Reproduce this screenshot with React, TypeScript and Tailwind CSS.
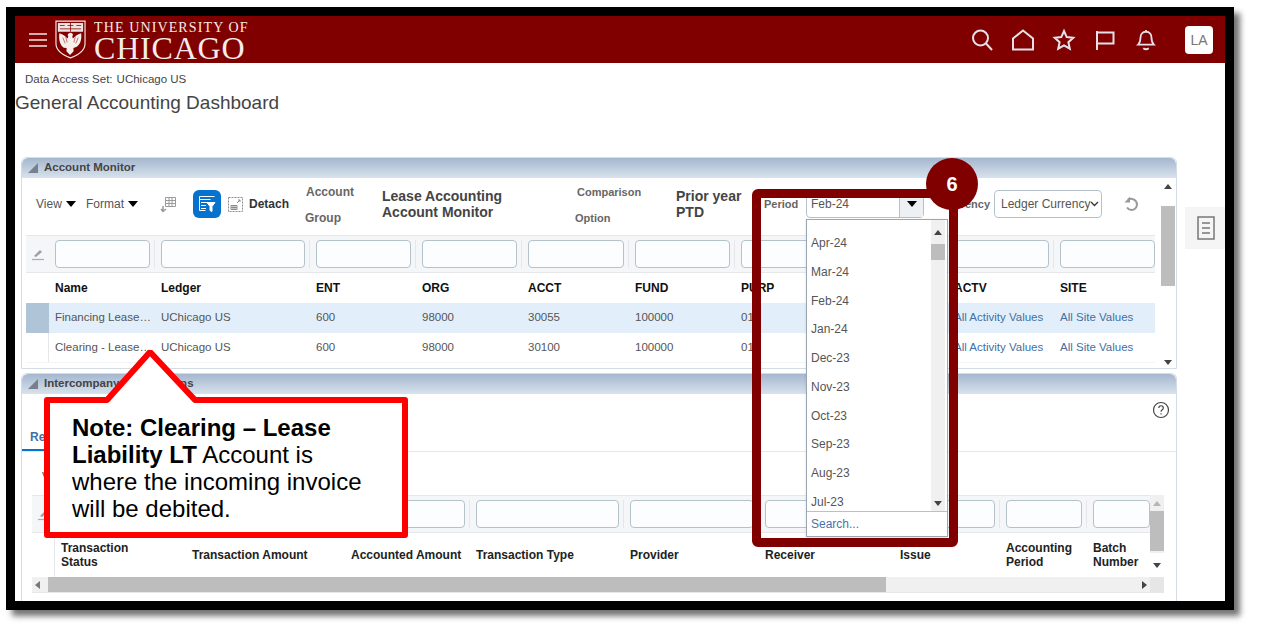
const monitorCols = "grid grid-cols-[23px_106px_155px_106px_106px_107px_106px_107px_106px_106px_101px]";
const interCols = "grid grid-cols-[23px_131px_159px_125px_154px_135px_135px_106px_87px_63px]";

const monitorHead = ["Name", "Ledger", "ENT", "ORG", "ACCT", "FUND", "PURP", "", "ACTV", "SITE"];
const monitorRows = [
  ["Financing Lease…", "UChicago US", "600", "98000", "30055", "100000", "01", "", "All Activity Values", "All Site Values"],
  ["Clearing - Lease…", "UChicago US", "600", "98000", "30100", "100000", "01", "", "All Activity Values", "All Site Values"],
];
const interHead = ["Transaction\nStatus", "Transaction Amount", "Accounted Amount", "Transaction Type", "Provider", "Receiver", "Issue", "Accounting\nPeriod", "Batch\nNumber"];
const periods = ["Apr-24", "Mar-24", "Feb-24", "Jan-24", "Dec-23", "Nov-23", "Oct-23", "Sep-23", "Aug-23", "Jul-23"];

function Logo() {
  return (
    <svg width="31" height="39" viewBox="0 0 32 40" fill="none">
      <path d="M1 1h30v23c0 8-7 12-15 15C8 36 1 32 1 24z" stroke="#f4e9e6" strokeWidth="1.200" />
      <rect x="3" y="3" width="26" height="9" fill="#f0e4e1" />
      <path d="M5 5.500h5M13 5.500h6M22 5.500h5M5 9h22M16 3v9" stroke="#800000" strokeWidth="0.800" />
      <path d="M16 13c1.500 0 2.500 1 2.500 2.300L17.800 17l.7 2c2-2.500 4.500-4.300 8.500-5.500.8 5.500-.5 11-4.500 14l-3.500 1.200.2 3.300-3.700 4-3.700-4 .2-3.300L9 28.500c-4-3-5.300-8.500-4.500-15 4 1.200 6.500 3 8.500 5.500l.7-2-.7-1.700C13.500 14 14.500 13 16 13z" fill="#f7efec" />
      <path d="M8 18l2.500 6M11 17l1.500 6M24 18l-2.500 6M21 17l-1.500 6" stroke="#a04040" strokeWidth="0.700" />
    </svg>
  );
}

function HeaderIcons() {
  const cls = "h-7 w-10 flex items-center justify-center";
  const stroke = { fill: "none", stroke: "#e3e1ea", strokeWidth: 2 };
  return (
    <div className="flex items-center gap-px">
      <div className={cls}>
        <svg width="24" height="24" viewBox="0 0 24 24" {...stroke}>
          <circle cx="10.500" cy="10" r="7.500" />
          <path d="M16 15.500l6 6.500" />
        </svg>
      </div>
      <div className={cls}>
        <svg width="24" height="24" viewBox="0 0 24 24" {...stroke}>
          <path d="M2 21.500V10.500L12 2.500l10 8v11z" />
        </svg>
      </div>
      <div className={cls}>
        <svg width="24" height="24" viewBox="0 0 24 24" {...stroke}>
          <path d="M12 3l2.700 6.100 6.600.7-4.900 4.400 1.400 6.500L12 17.400l-5.800 3.300 1.400-6.500-4.900-4.400 6.600-.7z" />
        </svg>
      </div>
      <div className={cls}>
        <svg width="24" height="24" viewBox="0 0 24 24" {...stroke}>
          <path d="M4 22V3M4 4.500h16.500v11H4" />
        </svg>
      </div>
      <div className={cls}>
        <svg width="22" height="22" viewBox="0 0 24 24" {...stroke}>
          <path d="M12 3c-4 0-6 3-6 6.500 0 4-1 6-2.500 7.500h17c-1.500-1.500-2.500-3.500-2.500-7.500C18 6 16 3 12 3zM9 21c1.800 1.300 4.200 1.300 6 0M12 1v2" />
        </svg>
      </div>
    </div>
  );
}

function Caret() {
  return <span className="inline-block border-x-[5px] border-t-[6px] border-x-transparent border-t-black" />;
}

function PanelHeader({ title }: { title: string }) {
  return (
    <div className="flex h-5 items-center gap-1.5 rounded-t-md bg-gradient-to-b from-[#a5b7cf] to-[#d8e2ed] pl-1.5">
      <svg width="10" height="10" viewBox="0 0 10 10">
        <path d="M10 0v10H0z" fill="#77808c" />
      </svg>
      <span className="text-[11.5px] font-bold text-[#444]">{title}</span>
    </div>
  );
}

function Eraser() {
  return (
    <svg width="14" height="14" viewBox="0 0 14 14">
      <path d="M3 9l6-6 2 2-6 5z" fill="#9aa0a6" />
      <path d="M1 12.500h12" stroke="#a8adb2" strokeWidth="1.200" />
    </svg>
  );
}

function FilterCell({ last }: { last?: boolean }) {
  return (
    <div className={last ? "pl-1.5" : "border-r border-gray-200 pl-1.5 pr-1"}>
      <div className="h-7 rounded-sm border border-[#b4c2cc] bg-[#fcfdfe]" />
    </div>
  );
}

function ScrollArrow({ up, color }: { up?: boolean; color: string }) {
  return (
    <span
      className={
        up
          ? "inline-block border-x-4 border-b-[5px] border-x-transparent"
          : "inline-block border-x-4 border-t-[5px] border-x-transparent"
      }
      style={up ? { borderBottomColor: color } : { borderTopColor: color }}
    />
  );
}

function AccountMonitor() {
  return (
    <section className="h-53 overflow-hidden rounded-t-md border border-[#d5dce4]">
      <PanelHeader title="Account Monitor" />
      <div className="flex">
        <div className="w-[1133px]">
          <div className="grid h-14 grid-cols-[50px_74px_33px_35px_77px_77px_193px_101px_88px_42px_188px_1fr] items-center pb-1 pl-3.5 text-xs text-[#555]">
            <div className="flex items-center gap-1">View <Caret /></div>
            <div className="flex items-center gap-1">Format <Caret /></div>
            <svg width="17" height="17" viewBox="0 0 17 17" fill="none" stroke="#9a9a9a">
              <path d="M5.500 1.500h10v9h-10zM5.500 4.500h10M5.500 7.500h10M9 1.500v9M12 1.500v9" />
              <path d="M3 10v5M1 13l2 2.500 3-2.500" strokeWidth="1.500" />
            </svg>
            <div className="flex h-7 w-7 items-center justify-center rounded-md bg-[#0572ce]">
              <svg width="18" height="18" viewBox="0 0 18 18" fill="none" stroke="#fff">
                <path d="M1.500 1.500h15M1.500 4.500h11M3 7.500h6M3 10.500h5M3 13.500h5M1.500 1.500v14h6" />
                <path d="M9 7.500h8l-3 4v5l-2-1v-4z" fill="#fff" />
              </svg>
            </div>
            <div className="flex items-center gap-1.5">
              <svg width="15" height="15" viewBox="0 0 15 15" fill="none" stroke="#8d8d8d">
                <rect x="0.500" y="0.500" width="14" height="14" strokeDasharray="2 1" />
                <path d="M3 8.500h6v4H3zM5 8.500v4M7 8.500v4M3 10.500h6M9 6l3-3M10 3h2v2" />
              </svg>
              <span className="font-bold text-[#333]">Detach</span>
            </div>
            <div className="flex h-full flex-col justify-between pb-1 pt-1.5 font-bold leading-4 text-[#666]">
              <span className="pl-px">Account</span>
              <span>Group</span>
            </div>
            <div className="text-sm font-bold leading-4 text-[#444]">Lease Accounting<br />Account Monitor</div>
            <div className="flex h-full flex-col justify-between pb-1 pt-1.5 text-[11px] font-bold leading-4 text-[#666]">
              <span className="pl-0.5">Comparison</span>
              <span>Option</span>
            </div>
            <div className="text-sm font-bold leading-4 text-[#444]">Prior year<br />PTD</div>
            <div className="text-[11px] font-bold text-[#666]">Period</div>
            <div className="flex items-center justify-between pr-1">
              <div className="flex h-7 w-[118px] rounded-sm border border-[#b4c2cc]">
                <span className="flex flex-1 items-center pl-1 text-xs">Feb-24</span>
                <span className="flex w-6 items-center justify-center border-l border-[#b4c2cc] bg-[#eef1f4]"><Caret /></span>
              </div>
              <span className="text-[11px] font-bold text-[#666]">Currency</span>
            </div>
            <div className="flex items-center">
              <div className="flex h-7 w-27 shrink-0 items-center justify-between rounded-sm border border-[#b4c2cc] pl-1.5 pr-1 text-xs whitespace-nowrap">
                Ledger Currency
                <svg className="shrink-0" width="9" height="6" viewBox="0 0 9 6" fill="none" stroke="#333" strokeWidth="1.300">
                  <path d="M1 1l3.500 3.500L8 1" />
                </svg>
              </div>
              <svg className="ml-5 shrink-0" width="18" height="18" viewBox="0 0 18 18" fill="none" stroke="#9a9a9a" strokeWidth="2">
                <path d="M6 4.500c4-2 9 .5 9 5 0 3-2.500 5.500-5.500 5.500-2 0-3.500-1-4.500-2.500" />
                <path d="M8 1.500v6H2.500z" fill="#9a9a9a" stroke="none" />
              </svg>
            </div>
          </div>
          <div className="ml-1 mt-px">
            <div className={`${monitorCols} items-center border-y border-gray-200 bg-[#f4f6f8] py-1`}>
              <div className="flex justify-center"><Eraser /></div>
              {monitorHead.map((_, i) => <FilterCell key={i} last={i === 9} />)}
            </div>
            <div className={`${monitorCols} h-7.5 items-center text-xs font-bold text-[#111]`}>
              <div />
              {monitorHead.map((h, i) => <div key={i} className="pl-1.5">{h}</div>)}
            </div>
            {monitorRows.map((row, r) => (
              <div key={r} className={`${monitorCols} h-7.5 items-center border-gray-100 text-[11.5px] text-[#555] ${r === 0 ? "bg-[#e2effb]" : "border-b"}`}>
                <div className={r === 0 ? "h-full bg-[#afc4d6]" : "h-full border-r border-gray-200"} />
                {row.map((c, i) => (
                  <div key={i} className={i >= 8 ? "whitespace-nowrap pl-1.5 text-[#3f6fa3]" : "whitespace-nowrap pl-1.5"}>{c}</div>
                ))}
              </div>
            ))}
          </div>
        </div>
        <div className="ml-1.5 flex h-48 w-3.5 flex-col items-center">
          <div className="mb-3 flex h-4 items-center"><ScrollArrow up color="#444" /></div>
          <div className="h-20 w-full bg-[#bdbdbd]" />
          <div className="mt-auto flex h-4 items-center"><ScrollArrow color="#444" /></div>
        </div>
      </div>
    </section>
  );
}

function Intercompany() {
  return (
    <section className="mt-1 flex-1 overflow-hidden rounded-t-md border border-b-0 border-[#d5dce4]">
      <PanelHeader title="Intercompany Transactions" />
      <div className="mb-px flex h-14.5 items-end justify-between border-b border-gray-200">
        <div className="border-b-2 border-[#0572ce] pb-1 pl-2 pr-6 text-xs font-bold text-[#3f6fa3]">Reconciliation</div>
        <svg className="mb-8 mr-1.5" width="18" height="18" viewBox="0 0 18 18" fill="none" stroke="#444" strokeWidth="1.200">
          <circle cx="9" cy="9" r="7.500" />
          <path d="M6.800 7c0-3 4.500-3 4.500 0 0 1.800-2.300 1.800-2.300 3.800M9 12.200v1.300" />
        </svg>
      </div>
      <div className="ml-2.5 mr-3 pt-4">
        <div className="pb-2.5 pl-2.5 text-xs text-[#555]">View</div>
        <div className="relative pr-3.5">
          <div className={`${interCols} items-center border-y border-gray-200 bg-[#f4f6f8] py-1 text-xs`}>
            <div className="flex justify-center"><Eraser /></div>
            {interHead.map((_, i) => <FilterCell key={i} last={i === 8} />)}
          </div>
          <div className={`${interCols} h-11 items-center text-xs font-bold leading-3.5 text-[#222]`}>
            <div className="h-full border-r border-gray-200" />
            {interHead.map((h, i) => <div key={i} className="whitespace-pre-line pl-1.5">{h}</div>)}
          </div>
          <div className="absolute right-0 top-0 flex h-full w-3.5 flex-col items-center bg-[#f0f0f0]">
            <div className="flex h-4 items-center"><ScrollArrow up color="#b5b5b5" /></div>
            <div className="h-10 w-full bg-[#bdbdbd]" />
            <div className="mt-auto flex h-6 w-full items-center justify-center bg-white"><ScrollArrow color="#444" /></div>
          </div>
        </div>
        <div className="flex h-4 items-center border-b border-gray-200 bg-[#f0f0f0]">
          <div className="rotate-90 px-1"><ScrollArrow color="#777" /></div>
          <div className="h-full w-[838px] bg-[#bdbdbd]" />
          <div className="ml-auto mr-1 -rotate-90"><ScrollArrow color="#444" /></div>
          <div className="h-full w-3.5 bg-[#e6e6e6]" />
        </div>
      </div>
    </section>
  );
}

function PeriodDropdown() {
  return (
    <div className="absolute left-[791px] top-[203px] w-[142px] border border-[#9aa7b3] bg-white text-xs text-[#555] shadow-sm">
      <div className="flex h-73 border-b border-[#b4c2cc]">
        <div className="flex flex-1 flex-col justify-between pb-0.5 pl-1 pt-4">
          {periods.map((p) => <div key={p} className="leading-3.5">{p}</div>)}
        </div>
        <div className="mr-0.5 flex w-3.5 flex-col items-center bg-[#f0f0f0]">
          <div className="flex h-6 items-center"><ScrollArrow up color="#444" /></div>
          <div className="h-4 w-full bg-[#bdbdbd]" />
          <div className="mt-auto flex h-4 items-center"><ScrollArrow color="#444" /></div>
        </div>
      </div>
      <div className="flex h-6 items-center pl-1 text-[#4a74ab]">Search...</div>
    </div>
  );
}

function Callout() {
  return (
    <div className="absolute left-[29px] top-[334px] h-47 w-[364px]">
      <svg className="absolute inset-0" width="364" height="188" viewBox="0 0 364 188">
        <path d="M3 50H63L106 2l45 48H361V185H3z" fill="#fff" stroke="#ff0000" strokeWidth="6" strokeLinejoin="round" />
      </svg>
      <p className="absolute left-7 top-16 whitespace-nowrap text-2xl leading-[27px] text-black">
        <b>Note: Clearing – Lease</b>
        <br />
        <b>Liability LT</b> Account is
        <br />
        where the incoming invoice
        <br />
        will be debited.
      </p>
    </div>
  );
}

export default function App() {
  return (
    <div className="h-screen overflow-hidden bg-white pl-1.5 pt-[7px] font-['Liberation_Sans',Arial,sans-serif]">
      <div className="relative flex h-[603px] w-[1228px] flex-col border-[9px] border-black shadow-[6px_6px_6px_rgba(0,0,0,0.55)]">
        <header className="flex h-[47px] shrink-0 items-center bg-[#800000] pl-3.5 pr-3">
          <svg width="18" height="14" viewBox="0 0 18 14" stroke="#f0e6e6" strokeWidth="1.600">
            <path d="M0 1h18M0 7h18M0 13h18" />
          </svg>
          <div className="ml-2"><Logo /></div>
          <div className="ml-2 flex flex-col font-['Liberation_Serif',serif] text-[#f5ecea]">
            <span className="whitespace-nowrap text-sm leading-4 tracking-[0.08em]">THE UNIVERSITY OF</span>
            <span className="text-[32px] leading-6 tracking-wide">CHICAGO</span>
          </div>
          <div className="ml-auto"><HeaderIcons /></div>
          <div className="ml-[19px] flex h-7 w-7 items-center justify-center rounded-sm bg-white text-sm text-[#777]">LA</div>
        </header>
        <div className="flex flex-1 flex-col overflow-hidden">
          <div className="flex gap-1 pl-2.5 pt-2 text-[11.5px] leading-4 text-[#444]">
            <span>Data Access Set:</span>
            <span>UChicago US</span>
          </div>
          <h1 className="text-[19px] font-normal leading-8 text-[#444]">General Accounting Dashboard</h1>
          <div className="flex flex-1 gap-2 overflow-hidden pl-1.5 pt-9.5">
            <div className="flex flex-1 flex-col">
              <AccountMonitor />
              <Intercompany />
            </div>
            <div className="mt-12.5 flex h-10.5 w-10 shrink-0 items-center justify-center border-y border-l border-gray-100 bg-[#f5f5f5]">
              <svg width="18" height="24" viewBox="0 0 18 24" fill="none" stroke="#777" strokeWidth="1.500">
                <rect x="1" y="1" width="16" height="22" />
                <path d="M5 7h8M5 12h8M5 17h8" />
              </svg>
            </div>
          </div>
        </div>
        <PeriodDropdown />
        <Callout />
        <div className="absolute left-[737px] top-[173px] h-[358px] w-[206px] rounded-md border-[9px] border-[#800000]" />
        <div className="absolute left-[911px] top-[142px] flex h-13 w-13 items-center justify-center rounded-full bg-[#800000] text-xl font-bold text-white">6</div>
      </div>
    </div>
  );
}
